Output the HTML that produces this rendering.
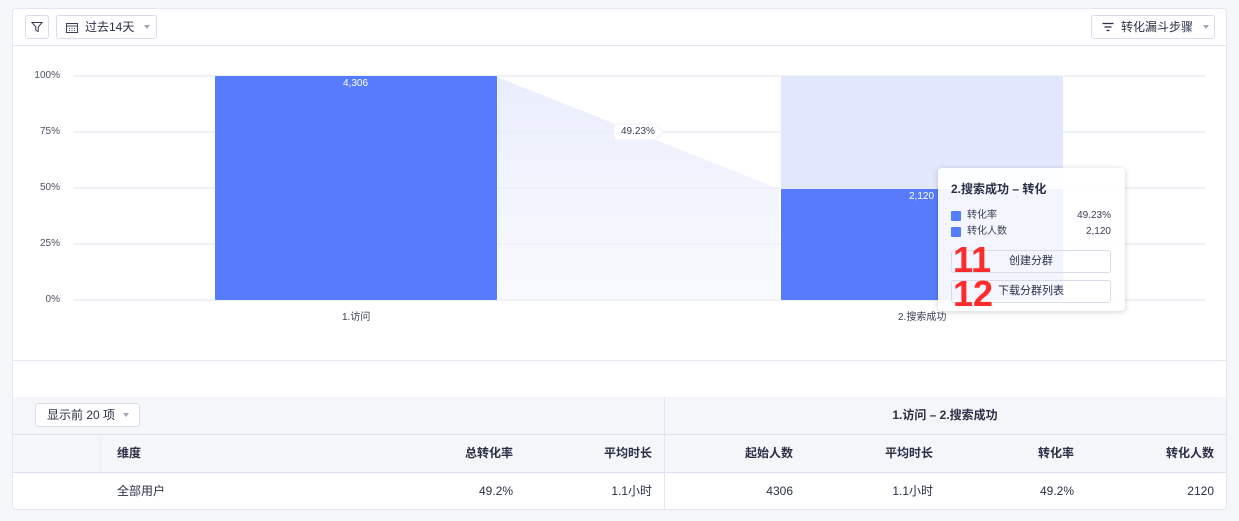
<!DOCTYPE html>
<html><head><meta charset="utf-8"><style>
*{box-sizing:border-box;margin:0;padding:0}
body{width:1239px;height:521px;background:#f5f6fa;font-family:"Liberation Sans","Noto Sans CJK SC",sans-serif;color:#2b2f45;position:relative;overflow:hidden}
.a{position:absolute;line-height:16px;white-space:nowrap}
.card{left:12px;top:8px;width:1215px;height:502px;background:#fff;border:1px solid #e3e6f0;border-radius:4px;overflow:hidden}
.btn{position:absolute;border:1px solid #d9dce8;border-radius:3px;background:#fff;font-size:12px;display:flex;align-items:center;line-height:16px}
.caret{width:0;height:0;border-left:3.5px solid transparent;border-right:3.5px solid transparent;border-top:4px solid #a0a4b4;display:inline-block}
.yl{position:absolute;font-size:10px;line-height:12px;color:#4a4f63;width:40px;text-align:right;left:20px}
.gl{position:absolute;left:73px;width:1132px;height:2px;background:#f0f1f7}
.th{position:absolute;font-size:12px;font-weight:bold;color:#2b2f45;line-height:16px}
.td{position:absolute;font-size:12px;color:#2b2f45;line-height:16px}
.r{text-align:right}
</style></head><body>
<div class="a card"></div>
<div class="btn" style="left:25px;top:15px;width:24px;height:24px;justify-content:center">
<svg width="12" height="12" viewBox="0 0 12 12"><path d="M1 1.5h10L7.2 6v4.5L4.8 9.3V6z" fill="none" stroke="#3a3f55" stroke-width="1"/></svg></div>
<div class="btn" style="left:56px;top:15px;width:101px;height:24px;padding-left:9px">
<svg width="12" height="11" viewBox="0 0 12 11"><rect x="0.5" y="1.5" width="11" height="9" fill="none" stroke="#3a3f55"/><path d="M0.5 4h11" stroke="#3a3f55"/><path d="M3 6.5h1M5.5 6.5h1M8 6.5h1M3 8.5h1M5.5 8.5h1M8 8.5h1" stroke="#3a3f55"/></svg>
<span style="margin-left:7px">过去14天</span><span class="caret" style="margin-left:10px"></span></div>
<div class="btn" style="left:1091px;top:15px;width:124px;height:24px;padding-left:10px">
<svg width="12" height="10" viewBox="0 0 12 10"><path d="M0.5 1.5h11M2.5 5h7M4.5 8.5h3" stroke="#2b2f45" stroke-width="1.3"/></svg>
<span style="margin-left:7px">转化漏斗步骤</span><span class="caret" style="margin-left:10px"></span></div>
<div class="a" style="left:13px;top:45px;width:1213px;height:1px;background:#e3e6f0"></div>
<div class="yl" style="top:70px">100%</div><div class="yl" style="top:126px">75%</div><div class="yl" style="top:182px">50%</div><div class="yl" style="top:238px">25%</div><div class="yl" style="top:294px">0%</div>
<div class="gl" style="top:75px"></div><div class="gl" style="top:131px"></div><div class="gl" style="top:187px"></div><div class="gl" style="top:243px"></div><div class="gl" style="top:299px"></div>
<svg class="a" style="left:0;top:0" width="1239" height="330">
<defs><linearGradient id="g" x1="0" y1="0" x2="0" y2="1"><stop offset="0" stop-color="#e4e9fb" stop-opacity=".8"/><stop offset="1" stop-color="#f4f6fe" stop-opacity=".6"/></linearGradient></defs>
<polygon points="497,77 779,189 779,300 497,300" fill="url(#g)"/>
<rect x="781" y="76" width="282" height="224" fill="#dfe6fc" opacity=".95"/>
<rect x="215" y="76" width="282" height="224" fill="#577cfb" rx="1"/>
<rect x="781" y="189" width="282" height="111" fill="#577cfb" rx="1"/>
<path d="M614 124h41l8 8l-8 8h-41z" fill="#fff" stroke="#eef0f7"/>
</svg>
<div class="a" style="left:343px;top:76px;font-size:10px;color:#fff">4,306</div>
<div class="a" style="left:909px;top:189px;font-size:10px;color:#fff">2,120</div>
<div class="a" style="left:621px;top:124px;font-size:10px;color:#3a3f55">49.23%</div>
<div class="a" style="left:342px;top:310px;font-size:10px;color:#3a3f55">1.访问</div>
<div class="a" style="left:898px;top:310px;font-size:10px;color:#3a3f55">2.搜索成功</div>
<div class="a" style="left:938px;top:168px;width:187px;height:143px;background:rgba(255,255,255,.93);border-radius:4px;box-shadow:0 1px 6px rgba(0,0,0,.18)"></div>
<div class="a" style="left:951px;top:181px;font-size:12px;font-weight:bold">2.搜索成功 – 转化</div>
<div class="a" style="left:951px;top:211px;width:10px;height:10px;background:#577cfb;border-radius:1px"></div>
<div class="a" style="left:967px;top:208px;font-size:10px;color:#3a3f55">转化率</div>
<div class="a r" style="left:1050px;top:208px;width:61px;font-size:10px;color:#3a3f55">49.23%</div>
<div class="a" style="left:951px;top:227px;width:10px;height:10px;background:#577cfb;border-radius:1px"></div>
<div class="a" style="left:967px;top:224px;font-size:10px;color:#3a3f55">转化人数</div>
<div class="a r" style="left:1050px;top:224px;width:61px;font-size:10px;color:#3a3f55">2,120</div>
<div class="a" style="left:951px;top:250px;width:160px;height:23px;border:1px solid #d9dce8;border-radius:3px;font-size:11px;text-align:center;line-height:21px">创建分群</div>
<div class="a" style="left:951px;top:280px;width:160px;height:23px;border:1px solid #d9dce8;border-radius:3px;font-size:11px;text-align:center;line-height:21px">下载分群列表</div>
<div class="a" style="left:953px;top:240px;font-size:36px;font-weight:bold;color:#ff2b2b;line-height:40px">11</div>
<div class="a" style="left:953px;top:274px;font-size:36px;font-weight:bold;color:#ff2b2b;line-height:40px">12</div>
<div class="a" style="left:13px;top:360px;width:1213px;height:1px;background:#e3e6f0"></div>
<div class="a" style="left:13px;top:397px;width:1213px;height:75px;background:#f5f6fa"></div>
<div class="a" style="left:13px;top:434px;width:1213px;height:1px;background:#dde1ee"></div>
<div class="a" style="left:13px;top:472px;width:1213px;height:1px;background:#dde1ee"></div>
<div class="a" style="left:664px;top:397px;width:1px;height:112px;background:#e3e6f0"></div>
<div class="a" style="left:100px;top:435px;width:1px;height:37px;background:#eceef4"></div>
<div class="btn" style="left:35px;top:403px;width:105px;height:24px;padding-left:11px"><span>显示前 20 项</span><span class="caret" style="margin-left:8px"></span></div>
<div class="th" style="left:664px;top:407px;width:562px;text-align:center">1.访问 – 2.搜索成功</div>
<div class="th" style="left:117px;top:445px">维度</div>
<div class="th r" style="left:413px;top:445px;width:100px">总转化率</div>
<div class="th r" style="left:552px;top:445px;width:100px">平均时长</div>
<div class="th r" style="left:693px;top:445px;width:100px">起始人数</div>
<div class="th r" style="left:833px;top:445px;width:100px">平均时长</div>
<div class="th r" style="left:974px;top:445px;width:100px">转化率</div>
<div class="th r" style="left:1114px;top:445px;width:100px">转化人数</div>
<div class="td" style="left:117px;top:483px">全部用户</div>
<div class="td r" style="left:413px;top:483px;width:100px">49.2%</div>
<div class="td r" style="left:552px;top:483px;width:100px">1.1小时</div>
<div class="td r" style="left:693px;top:483px;width:100px">4306</div>
<div class="td r" style="left:833px;top:483px;width:100px">1.1小时</div>
<div class="td r" style="left:974px;top:483px;width:100px">49.2%</div>
<div class="td r" style="left:1114px;top:483px;width:100px">2120</div>
</body></html>
